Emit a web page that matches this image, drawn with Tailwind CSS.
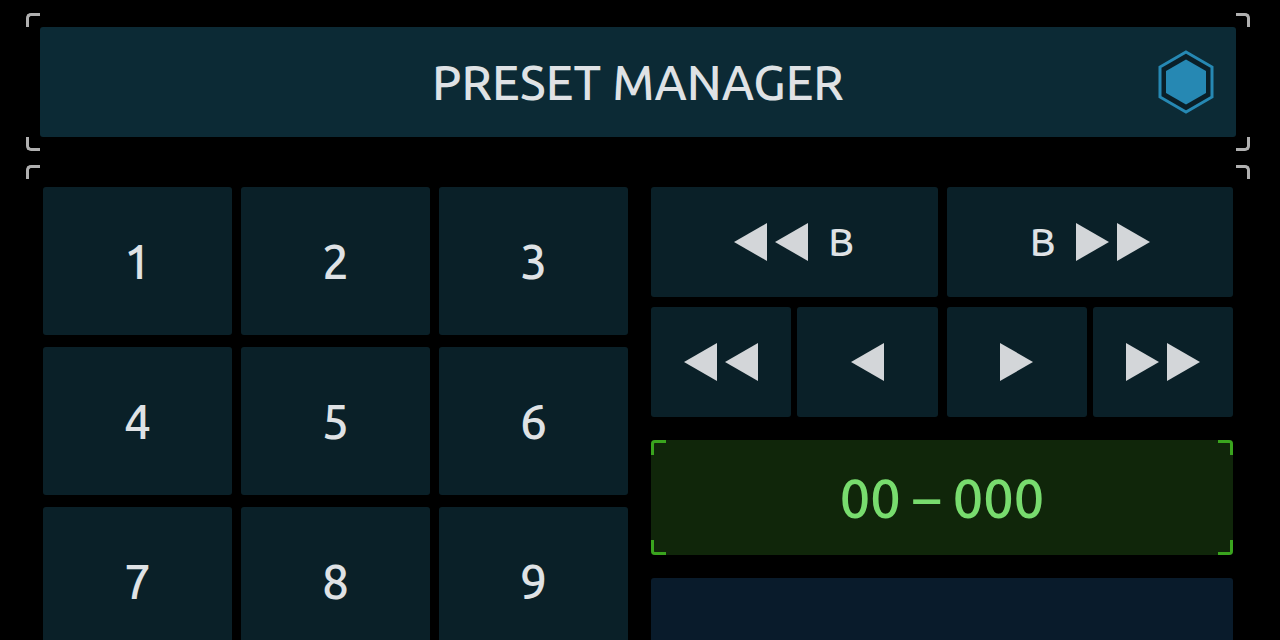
<!DOCTYPE html>
<html lang="en">
<head>
<meta charset="utf-8">
<meta name="viewport" content="width=device-width, initial-scale=1">
<title>Preset Manager</title>
<script src="https://cdn.jsdelivr.net/npm/@tailwindcss/browser@4"></script>
</head>
<body class="bg-black font-['Ubuntu','Noto_Sans',sans-serif] font-medium text-[#dfe2e5]">
<svg class="hidden" aria-hidden="true">
  <symbol id="left" viewBox="0 0 33 38"><path d="M33 0V38L0 19Z" fill="#d3d6d9"/></symbol>
  <symbol id="right" viewBox="0 0 33 38"><path d="M0 0V38L33 19Z" fill="#d3d6d9"/></symbol>
</svg>
<main class="flex h-screen flex-col gap-[14px] overflow-hidden pt-[13px] pr-[30px] pl-[26px]">
  <header class="relative shrink-0 p-[14px]">
    <span class="absolute top-0 left-0 size-[14px] rounded-tl-[5px] border-t-[3px] border-l-[3px] border-[#b0b0b0]"></span>
    <span class="absolute top-0 right-0 size-[14px] rounded-tr-[5px] border-t-[3px] border-r-[3px] border-[#b0b0b0]"></span>
    <span class="absolute bottom-0 left-0 size-[14px] rounded-bl-[5px] border-b-[3px] border-l-[3px] border-[#b0b0b0]"></span>
    <span class="absolute right-0 bottom-0 size-[14px] rounded-br-[5px] border-r-[3px] border-b-[3px] border-[#b0b0b0]"></span>
    <div class="grid h-[110px] grid-cols-[1fr_auto_1fr] items-center rounded-[3px] bg-[#0c2a35] px-[22px]">
      <h1 class="col-start-2 text-[48px] leading-[56px] font-medium">PRESET MANAGER</h1>
      <button type="button" aria-label="Preset status" class="justify-self-end">
        <svg class="h-[64px] w-[56px]" viewBox="0 0 56 64" aria-hidden="true">
          <path d="M28 2L54 17V47L28 62L2 47V17Z" fill="#0a1f28" stroke="#2688b3" stroke-width="3"/>
          <path d="M28 9.5L48 21V43L28 54.5L8 43V21Z" fill="#2688b3"/>
        </svg>
      </button>
    </div>
  </header>

  <section class="relative grid shrink-0 grid-cols-[585fr_582fr] gap-[23px] px-[17px] pt-[22px] pb-[17px]">
    <span class="absolute top-0 left-0 size-[14px] rounded-tl-[5px] border-t-[3px] border-l-[3px] border-[#b0b0b0]"></span>
    <span class="absolute top-0 right-0 size-[14px] rounded-tr-[5px] border-t-[3px] border-r-[3px] border-[#b0b0b0]"></span>

    <div class="grid grid-cols-3 content-start gap-x-[9px] gap-y-[12px] text-[48px] leading-[56px]">
      <button type="button" class="h-[148px] rounded-[3px] bg-[#0a2028]">1</button>
      <button type="button" class="h-[148px] rounded-[3px] bg-[#0a2028]">2</button>
      <button type="button" class="h-[148px] rounded-[3px] bg-[#0a2028]">3</button>
      <button type="button" class="h-[148px] rounded-[3px] bg-[#0a2028]">4</button>
      <button type="button" class="h-[148px] rounded-[3px] bg-[#0a2028]">5</button>
      <button type="button" class="h-[148px] rounded-[3px] bg-[#0a2028]">6</button>
      <button type="button" class="h-[148px] rounded-[3px] bg-[#0a2028]">7</button>
      <button type="button" class="h-[148px] rounded-[3px] bg-[#0a2028]">8</button>
      <button type="button" class="h-[148px] rounded-[3px] bg-[#0a2028]">9</button>
    </div>

    <div class="flex flex-col gap-[23px]">
      <div class="grid grid-cols-2 gap-x-[9px] gap-y-[10px] text-[40px] leading-[56px]">
        <button type="button" class="flex h-[110px] items-center justify-center gap-[8px] rounded-[3px] bg-[#0a2028]">
          <svg class="h-[38px] w-[33px]" aria-hidden="true"><use href="#left"/></svg>
          <svg class="h-[38px] w-[33px]" aria-hidden="true"><use href="#left"/></svg>
          <span class="pl-[12px]">B</span>
        </button>
        <button type="button" class="flex h-[110px] items-center justify-center gap-[8px] rounded-[3px] bg-[#0a2028]">
          <span class="pr-[12px]">B</span>
          <svg class="h-[38px] w-[33px]" aria-hidden="true"><use href="#right"/></svg>
          <svg class="h-[38px] w-[33px]" aria-hidden="true"><use href="#right"/></svg>
        </button>
        <div class="grid h-[110px] grid-cols-2 gap-[6px]">
          <button type="button" aria-label="Back fast" class="flex items-center justify-center gap-[8px] rounded-[3px] bg-[#0a2028]">
            <svg class="h-[38px] w-[33px]" aria-hidden="true"><use href="#left"/></svg>
            <svg class="h-[38px] w-[33px]" aria-hidden="true"><use href="#left"/></svg>
          </button>
          <button type="button" aria-label="Back" class="flex items-center justify-center rounded-[3px] bg-[#0a2028]">
            <svg class="h-[38px] w-[33px]" aria-hidden="true"><use href="#left"/></svg>
          </button>
        </div>
        <div class="grid h-[110px] grid-cols-2 gap-[6px]">
          <button type="button" aria-label="Forward" class="flex items-center justify-center rounded-[3px] bg-[#0a2028]">
            <svg class="h-[38px] w-[33px]" aria-hidden="true"><use href="#right"/></svg>
          </button>
          <button type="button" aria-label="Forward fast" class="flex items-center justify-center gap-[8px] rounded-[3px] bg-[#0a2028]">
            <svg class="h-[38px] w-[33px]" aria-hidden="true"><use href="#right"/></svg>
            <svg class="h-[38px] w-[33px]" aria-hidden="true"><use href="#right"/></svg>
          </button>
        </div>
      </div>

      <div class="relative flex h-[115px] items-center justify-center rounded-[3px] bg-[#10260a] text-[54px] leading-[64px] text-[#78dc6e]">
        <span class="absolute top-0 left-0 size-[15px] rounded-tl-[4px] border-t-[3px] border-l-[3px] border-[#3aa41e]"></span>
        <span class="absolute top-0 right-0 size-[15px] rounded-tr-[4px] border-t-[3px] border-r-[3px] border-[#3aa41e]"></span>
        <span class="absolute bottom-0 left-0 size-[15px] rounded-bl-[4px] border-b-[3px] border-l-[3px] border-[#3aa41e]"></span>
        <span class="absolute right-0 bottom-0 size-[15px] rounded-br-[4px] border-r-[3px] border-b-[3px] border-[#3aa41e]"></span>
        <output>00 – 000</output>
      </div>

      <div class="h-[115px] rounded-[3px] bg-[#091b2b]"></div>
    </div>
  </section>
</main>
</body>
</html>
